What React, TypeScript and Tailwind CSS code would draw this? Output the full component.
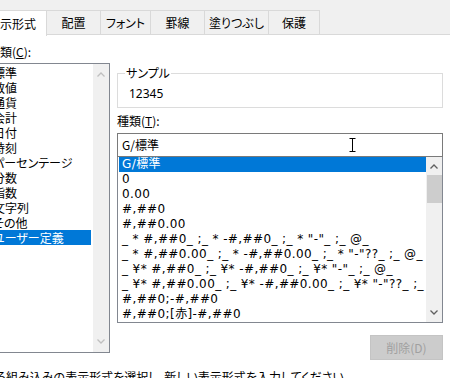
const tabs = [
  { label: "表示形式", w: "w-[70px] -ml-[23px]", active: true },
  { label: "配置", w: "w-[55px]" },
  { label: "フォント", w: "w-[51px]" },
  { label: "罫線", w: "w-[55px]" },
  { label: "塗りつぶし", w: "w-[65px]" },
  { label: "保護", w: "w-[52px]" },
];

const categories = [
  "標準",
  "数値",
  "通貨",
  "会計",
  "日付",
  "時刻",
  "パーセンテージ",
  "分数",
  "指数",
  "文字列",
  "その他",
  "ユーザー定義",
];

const formats = [
  "G/標準",
  "0",
  "0.00",
  "#,##0",
  "#,##0.00",
  '_ * #,##0_ ;_ * -#,##0_ ;_ * "-"_ ;_ @_ ',
  '_ * #,##0.00_ ;_ * -#,##0.00_ ;_ * "-"??_ ;_ @_ ',
  '_ ¥* #,##0_ ;_ ¥* -#,##0_ ;_ ¥* "-"_ ;_ @_ ',
  '_ ¥* #,##0.00_ ;_ ¥* -#,##0.00_ ;_ ¥* "-"??_ ;_ @_ ',
  "#,##0;-#,##0",
  "#,##0;[赤]-#,##0",
];

function Chevron({ down, className }: { down?: boolean; className: string }) {
  return (
    <svg width="8" height="5" viewBox="0 0 8 5" className={className}>
      <path
        d={down ? "M0.5 0.5 L4 4 L7.5 0.5" : "M0.5 4.5 L4 1 L7.5 4.5"}
        fill="none"
        stroke="currentColor"
        strokeWidth="1.3"
      />
    </svg>
  );
}

export default function App() {
  return (
    <div className="h-[378px] w-[450px] overflow-hidden bg-white text-[12px] leading-[16px] text-black font-['Noto_Sans_CJK_JP',sans-serif] [font-feature-settings:'palt']">
      {/* tab strip */}
      <div className="flex h-[35px] items-end bg-[#f0f0f0] pt-[10px]">
        <div className="flex h-[25px] w-full border-b border-[#d9d9d9]">
          {tabs.map((t) =>
            t.active ? (
              <div
                key={t.label}
                className={`${t.w} relative z-10 -mb-px flex h-[26px] shrink-0 items-center justify-center border border-b-0 border-[#d9d9d9] bg-white`}
              >
                {t.label}
              </div>
            ) : (
              <div
                key={t.label}
                className={`${t.w} -ml-px flex shrink-0 items-center justify-center border border-b-0 border-[#d9d9d9] bg-[#f0f0f0]`}
              >
                {t.label}
              </div>
            )
          )}
        </div>
      </div>

      {/* page */}
      <div className="flex h-[331px] flex-col">
        <div className="flex h-[325px]">
          {/* category column */}
          <div className="-ml-[20px] w-[130px] shrink-0 pt-[9px]">
            <div className="pl-[8px]">
              分類(<span className="underline">C</span>):
            </div>
            <div className="mt-[3px] flex h-[290px] border border-[#828790]">
              <div className="flex-1 pt-[1px]">
                {categories.map((c) => (
                  <div
                    key={c}
                    className={`mr-[2px] h-[15px] whitespace-nowrap pl-[12px] leading-[15px] ${
                      c === "ユーザー定義" ? "bg-[#0078d7] text-white" : ""
                    }`}
                  >
                    {c}
                  </div>
                ))}
              </div>
              <div className="flex w-[16px] flex-col items-center justify-between bg-[#f0f0f0] py-[8px] text-[#bfbfbf]">
                <Chevron className="" />
                <Chevron down className="" />
              </div>
            </div>
          </div>

          {/* type column */}
          <div className="ml-[7px] flex w-[326px] shrink-0 flex-col">
            <fieldset className="mt-[30px] h-[43px] border border-[#dcdcdc] pl-[7px] pb-[3px]">
              <legend className="px-[1px] leading-[16px]">サンプル</legend>
              <div className="pl-[4px] pt-[5px] font-['Noto_Sans',sans-serif]">12345</div>
            </fieldset>
            <div className="mt-[5px]">
              種類(<span className="underline">T</span>):
            </div>
            <div className="relative mt-[4px] flex h-[24px] items-center border border-[#7a7a7a] pl-[4px]">
              G/標準
              <svg
                width="7"
                height="14"
                viewBox="0 0 7 14"
                className="absolute left-[231px] top-[4px]"
              >
                <path
                  d="M0.5 0.5 H6.5 M3.5 0.5 V13.5 M0.5 13.5 H6.5"
                  fill="none"
                  stroke="#000"
                  strokeWidth="1"
                />
              </svg>
            </div>
            <div className="-mt-px flex h-[168px] border border-[#828790]">
              <div className="min-w-0 flex-1 overflow-hidden font-['DejaVu_Sans','Noto_Sans_CJK_JP',sans-serif] tracking-[0.4px]">
                {formats.map((f, i) => (
                  <div
                    key={f}
                    className={`ml-px h-[15px] whitespace-pre pl-[3px] leading-[15px] ${
                      i === 0 ? "bg-[#0078d7] text-white" : ""
                    }`}
                  >
                    {f}
                  </div>
                ))}
              </div>
              <div className="flex w-[16px] shrink-0 flex-col items-center bg-[#f0f0f0] text-[#606060]">
                <Chevron className="mt-[7px]" />
                <div className="mt-[6px] h-[28px] w-[15px] bg-[#cdcdcd]" />
                <div className="flex-1" />
                <Chevron down className="mb-[7px]" />
              </div>
            </div>
            <div className="mt-[12px] flex justify-end">
              <div className="flex h-[25px] w-[73px] items-center justify-center border border-[#c4c4c4] bg-[#cccccc] text-[#a0a0a0]">
                削除(D)
              </div>
            </div>
          </div>
        </div>
        <div className="-ml-[40px] mt-[9px] whitespace-nowrap">
          基になる組み込みの表示形式を選択し、新しい表示形式を入力してください。
        </div>
      </div>
    </div>
  );
}
